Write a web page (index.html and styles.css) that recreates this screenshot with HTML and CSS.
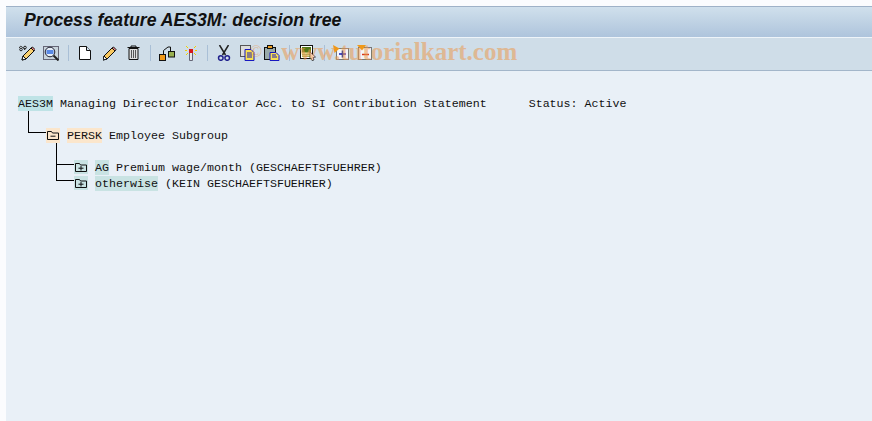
FILE: index.html
```html
<!DOCTYPE html>
<html lang="en">
<head>
  <meta charset="UTF-8" />
  <title>Process feature AES3M: decision tree</title>
  <link rel="stylesheet" href="styles.css">
</head>
<body>
  <div class="window">
    <div class="title-bar">
      <h1>Process feature AES3M: decision tree</h1>
    </div>

    <div class="toolbar">
      <!-- change (glasses + pencil) -->
      <button class="tool"><svg viewBox="0 0 16 16" width="16" height="16"><path d="M0 3c1-2 2-2 3-1s2 1 3 3" fill="none" stroke="#222"/><circle cx="2" cy="4.500" r="1.300" fill="none" stroke="#222"/><circle cx="6" cy="2.500" r="1.300" fill="none" stroke="#222"/><path d="M3 15l1-4 8-8 3 3-8 8z" fill="#f8d070" stroke="#111"/><path d="M12 3l3 3 1-1.500-2.500-2.500z" fill="#e88" stroke="#111"/><path d="M3 15l1-4 3 3z" fill="#fff" stroke="#111"/></svg></button>
      <!-- display object list -->
      <button class="tool"><svg viewBox="0 0 16 16" width="16" height="16"><rect x="0.500" y="1.500" width="15" height="13" fill="#c8d4dc" stroke="#667"/><circle cx="7" cy="7" r="4.800" fill="#e4ecf6" stroke="#223"/><path d="M3.500 6h7M3.500 8h7" stroke="#2c68e0" stroke-width="1.500"/><path d="M10.500 10.500l5 5" stroke="#222" stroke-width="2"/></svg></button>
      <span class="sep"></span>
      <!-- new -->
      <button class="tool"><svg viewBox="0 0 16 16" width="16" height="16"><path d="M0.500 1.500h7l4 4v9h-11z" fill="#fff" stroke="#111"/><path d="M7.500 1.500v4h4" fill="#cfe0f0" stroke="#111"/></svg></button>
      <!-- pencil -->
      <button class="tool"><svg viewBox="0 0 16 16" width="16" height="16"><path d="M0 15l1-4 8-8 3 3-8 8z" fill="#f8c860" stroke="#111"/><path d="M9 3l3 3 1-1.500-2.500-2.500z" fill="#e88" stroke="#111"/><path d="M0 15l1-4 3 3z" fill="#fff" stroke="#111"/></svg></button>
      <!-- trash -->
      <button class="tool"><svg viewBox="0 0 16 16" width="16" height="16"><path d="M0.500 2.500h12M4 2.500V1h5v1.500" fill="none" stroke="#111"/><path d="M2 3.500h9v11H2z" fill="#ddd" stroke="#111"/><path d="M4.500 5v8M6.500 5v8M8.500 5v8" stroke="#555"/></svg></button>
      <span class="sep sep-narrow"></span>
      <!-- hierarchy -->
      <button class="tool"><svg viewBox="0 0 16 16" width="16" height="16"><path d="M4.500 9V5.500L9 2h2.500v5" fill="none" stroke="#111"/><rect x="0.500" y="9.500" width="6" height="6" fill="#f09818" stroke="#111"/><rect x="9.500" y="6.500" width="6" height="5.500" fill="#98b050" stroke="#111"/></svg></button>
      <!-- activate -->
      <button class="tool"><svg viewBox="0 0 16 16" width="16" height="16"><path d="M6.500 6.500h3v9h-3z" fill="#e8e8e8" stroke="#667"/><rect x="6" y="4" width="4" height="4" fill="#d81818"/><path d="M3 1l2 2M13 1l-2 2M2 5.500h2M12 5.500h2M3 10l2-2M13 10l-2-2" stroke="#f0d000"/></svg></button>
      <span class="sep sep-mid"></span>
      <!-- cut -->
      <button class="tool"><svg viewBox="0 0 16 16" width="16" height="16"><path d="M3.500 0l6 10M12.500 0l-6 10" stroke="#222" stroke-width="1.500"/><circle cx="4.800" cy="13" r="2.300" fill="none" stroke="#20208c" stroke-width="1.500"/><circle cx="11.200" cy="13" r="2.300" fill="none" stroke="#20208c" stroke-width="1.500"/></svg></button>
      <!-- copy -->
      <button class="tool"><svg viewBox="0 0 16 16" width="16" height="16"><rect x="0.500" y="0.500" width="10" height="11" fill="#dcdcdc" stroke="#555"/><path d="M5 4.500h6l3 3v8H5z" fill="#f8e050" stroke="#1818c0"/><path d="M7 8h5M7 10h5M7 12h5" stroke="#1818c0"/></svg></button>
      <!-- paste -->
      <button class="tool"><svg viewBox="0 0 16 16" width="16" height="16"><rect x="0.500" y="2.500" width="11" height="12" fill="#9aa" stroke="#111"/><rect x="3.500" y="0.500" width="5" height="3" fill="#f0a020" stroke="#111"/><path d="M6 7.500h6l3 3v5H6z" fill="#f8e050" stroke="#1818c0"/><path d="M8 10h4M8 12h5" stroke="#1818c0"/></svg></button>
      <span class="sep"></span>
      <!-- choose layout -->
      <button class="tool"><svg viewBox="0 0 16 16" width="16" height="16"><rect x="0.500" y="0.500" width="12" height="13" fill="#fff" stroke="#111"/><rect x="2" y="2" width="9" height="5" fill="#507818"/><path d="M2 7h9v5H2z" fill="#a8b060"/><path d="M2 8.500h9M2 10.500h9" stroke="#d8d890"/><path d="M10 7l5.500 5-2.500.500 1 2.500-2 .500-1-2.500-1 1z" fill="#fff" stroke="#111" stroke-width=".7"/></svg></button>
      <span class="sep sep-mid"></span>
      <!-- expand -->
      <button class="tool"><svg viewBox="0 0 16 16" width="16" height="16"><rect x="3.500" y="3.500" width="12" height="11" fill="#f4f6fa" stroke="#777"/><path d="M0 0l6.500 3.500L1.500 8z" fill="#f09818"/><path d="M6 9h7M9.500 5.500v7" stroke="#1818b0" stroke-width="1.500"/></svg></button>
      <!-- collapse -->
      <button class="tool"><svg viewBox="0 0 16 16" width="16" height="16"><rect x="1.500" y="2.500" width="13" height="12" fill="#f4f6fa" stroke="#777"/><path d="M0 0h9L5 5.500z" fill="#f09818"/><path d="M5 9.500h7" stroke="#d83818" stroke-width="1.500"/></svg></button>
    </div>

    <div class="tree">
      <div class="row row-root"><span class="key key-root">AES3M</span> Managing Director Indicator Acc. to SI Contribution Statement      Status: Active</div>

      <div class="row level-1"><span class="folder folder-open"><svg viewBox="0 0 14 12" width="14" height="12"><path d="M1.500 10.500v-8h4l1 1.500h6v6.500z" fill="none" stroke="#111"/><path d="M4.500 7.200h5" stroke="#111"/></svg></span> <span class="key key-orange">PERSK</span> Employee Subgroup</div>

      <div class="row level-2 first"><span class="folder"><svg viewBox="0 0 14 12" width="14" height="12"><path d="M1.500 10.500v-8h4l1 1.500h6v6.500z" fill="none" stroke="#111"/><path d="M4.500 7.200h5M7 5v4.500" stroke="#111"/></svg></span> <span class="key">AG</span> Premium wage/month (GESCHAEFTSFUEHRER)</div>
      <div class="row level-2 last"><span class="folder"><svg viewBox="0 0 14 12" width="14" height="12"><path d="M1.500 10.500v-8h4l1 1.500h6v6.500z" fill="none" stroke="#111"/><path d="M4.500 7.200h5M7 5v4.500" stroke="#111"/></svg></span> <span class="key">otherwise</span> (KEIN GESCHAEFTSFUEHRER)</div>
    </div>
  </div>

  <div class="watermark"><span class="copy-mark">©</span><span>www.tutorialkart.com</span></div>
</body>
</html>
```

FILE: styles.css
```css
html, body {
  height: 100%;
}
body {
  margin: 0;
  padding: 6px 0 0 6px;
  box-sizing: border-box;
  background: #fbfcfe;
  overflow: hidden;
}
.window {
  display: flex;
  flex-direction: column;
  height: 100%;
  background: #e9f0f7;
}
.title-bar {
  height: 32px;
  box-sizing: border-box;
  padding-left: 18px;
  border-top: 1px solid #9fb2c8;
  border-bottom: 1px solid #eef4f9;
  background: linear-gradient(#d0e0ec, #aec4dc);
}
h1 {
  margin: 0;
  font: italic bold 17.67px/26px "Liberation Sans", Arial, sans-serif;
  color: #111;
}
.toolbar {
  display: flex;
  align-items: center;
  height: 33px;
  box-sizing: border-box;
  padding: 0 0 2px 9px;
  background: #cfdde8;
  border-bottom: 1px solid #a3b6ca;
}
.tool {
  display: flex;
  justify-content: center;
  width: 24px;
  padding: 0;
  border: none;
  background: transparent;
}
.sep {
  width: 1px;
  height: 16px;
  margin: 0 6px 0 5px;
  background: #a9bfd6;
}
.sep-narrow {
  margin: 0 4px 0 3px;
}
.sep-mid {
  margin: 0 4px;
}
.tree {
  padding: 25px 0 0 12px;
  font: 11.67px/16px "Liberation Mono", "Courier New", monospace;
  color: #111;
}
.row {
  height: 16px;
  white-space: pre;
}
.row-root {
  margin-bottom: 16px;
}
.level-1 {
  margin: 0 0 16px 28px;
}
.level-2 {
  margin-left: 56px;
}
.key {
  display: inline-block;
  height: 15px;
  vertical-align: top;
  background: #c9e3e3;
}
.key-root {
  background: #bfe3e6;
}
.key-orange {
  background: #fbe6cc;
}
.folder {
  position: relative;
  display: inline-block;
  width: 14px;
  height: 14px;
  vertical-align: top;
  background: #c9e3e3;
}
.folder-open {
  height: 15px;
  background: #fbe6cc;
}
.folder svg {
  display: block;
  margin-top: 1px;
}
/* tree connectors */
.folder::before {
  content: "";
  position: absolute;
  left: -18px;
  width: 17px;
  height: 21px;
  top: -17px;
  border-left: 1px solid #000;
  border-bottom: 1px solid #000;
}
.watermark {
  position: absolute;
  left: 250px;
  top: 38px;
  display: flex;
  align-items: center;
  gap: 19px;
  font: bold 25px/28px "Liberation Serif", "Times New Roman", serif;
  color: #eb9a50;
  opacity: 0.55;
}
.copy-mark {
  font-size: 16px;
  font-weight: normal;
}
```
